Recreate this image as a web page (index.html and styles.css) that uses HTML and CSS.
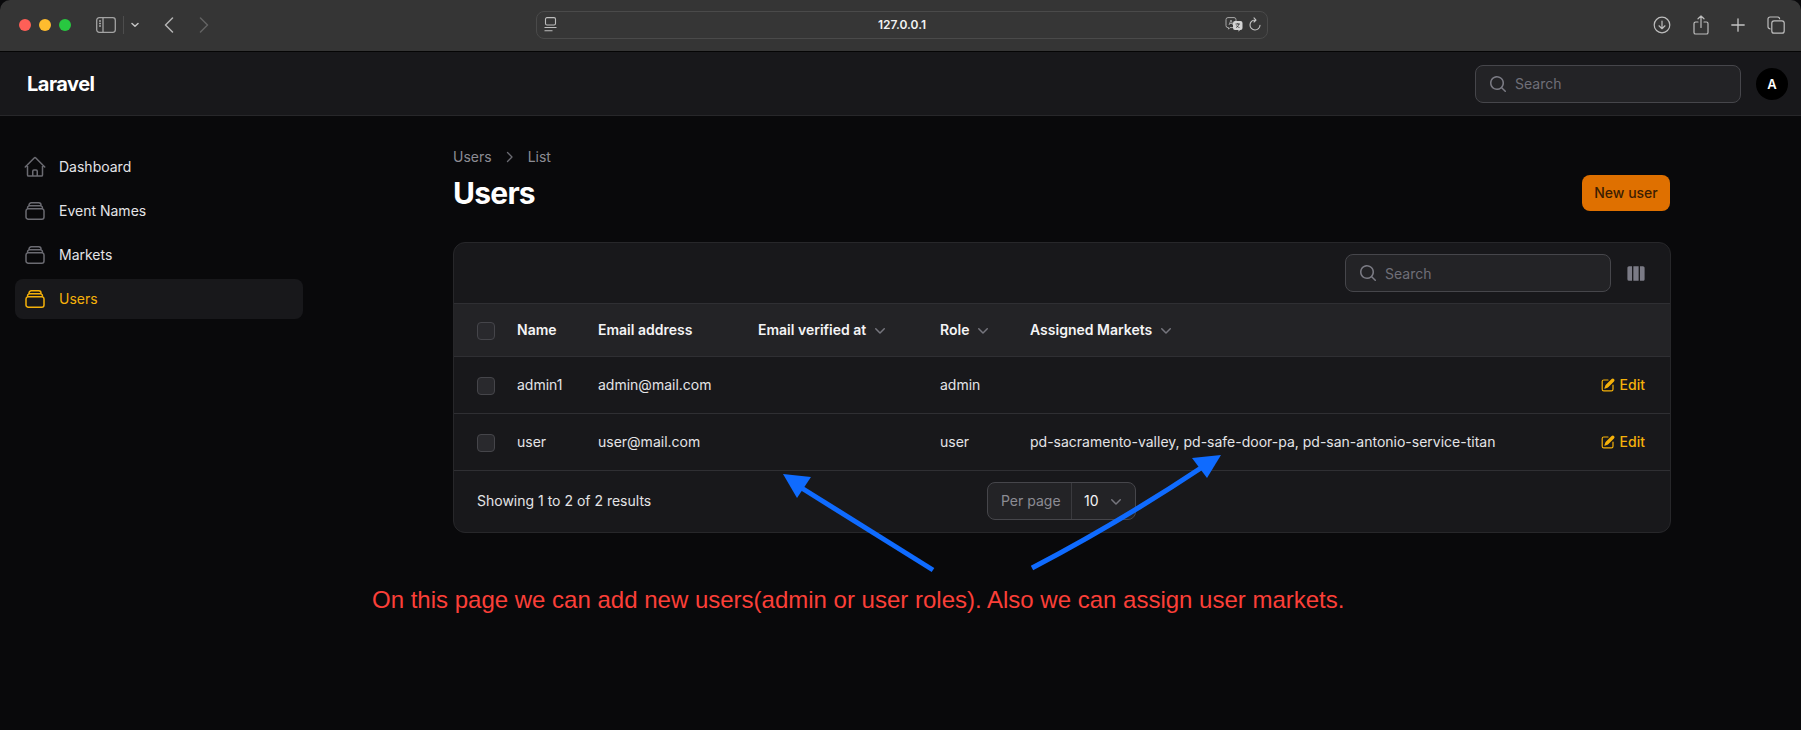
FILE: index.html
```html
<!DOCTYPE html>
<html lang="en">
<head>
  <meta charset="UTF-8" />
  <title>Users - Laravel</title>
  <link rel="stylesheet" href="styles.css">
</head>
<body>
  <svg class="icon-defs" aria-hidden="true">
    <symbol id="i-home" viewBox="0 0 24 24"><path d="m2.25 12 8.954-8.955c.44-.439 1.152-.439 1.591 0L21.75 12M4.5 9.75v10.125c0 .621.504 1.125 1.125 1.125H9.75v-4.875c0-.621.504-1.125 1.125-1.125h2.25c.621 0 1.125.504 1.125 1.125V21h4.125c.621 0 1.125-.504 1.125-1.125V9.75M8.25 21h8.25" fill="none" stroke="currentColor" stroke-width="1.5" stroke-linecap="round" stroke-linejoin="round"/></symbol>
    <symbol id="i-stack" viewBox="0 0 24 24"><path d="M6 6.878V6a2.25 2.25 0 0 1 2.25-2.25h7.5A2.25 2.25 0 0 1 18 6v.878m-12 0c.235-.083.487-.128.75-.128h10.5c.263 0 .515.045.75.128m-12 0A2.25 2.25 0 0 0 4.5 9v.878m13.5-3A2.25 2.25 0 0 1 19.5 9v.878m0 0a2.246 2.246 0 0 0-.75-.128H5.25c-.263 0-.515.045-.75.128m15 0A2.25 2.25 0 0 1 21 12v6a2.25 2.25 0 0 1-2.25 2.25H5.25A2.25 2.25 0 0 1 3 18v-6c0-.98.626-1.813 1.5-2.122" fill="none" stroke="currentColor" stroke-width="1.5" stroke-linecap="round" stroke-linejoin="round"/></symbol>
    <symbol id="i-search" viewBox="0 0 20 20"><path fill="currentColor" fill-rule="evenodd" clip-rule="evenodd" d="M9 3.5a5.5 5.5 0 1 0 0 11 5.5 5.5 0 0 0 0-11ZM2 9a7 7 0 1 1 12.452 4.391l3.328 3.329a.75.75 0 1 1-1.06 1.06l-3.329-3.328A7 7 0 0 1 2 9Z"/></symbol>
    <symbol id="i-chevron" viewBox="0 0 20 20"><path fill="currentColor" fill-rule="evenodd" clip-rule="evenodd" d="M5.22 8.22a.75.75 0 0 1 1.06 0L10 11.94l3.72-3.72a.75.75 0 1 1 1.06 1.06l-4.25 4.25a.75.75 0 0 1-1.06 0L5.22 9.28a.75.75 0 0 1 0-1.06Z"/></symbol>
    <symbol id="i-edit" viewBox="0 0 20 20"><path fill="currentColor" d="m5.433 13.917 1.262-3.155A4 4 0 0 1 7.58 9.42l6.92-6.918a2.121 2.121 0 0 1 3 3l-6.92 6.918c-.383.383-.84.685-1.343.886l-3.154 1.262a.5.5 0 0 1-.65-.65Z"/><path fill="currentColor" d="M3.5 5.75c0-.69.56-1.25 1.25-1.25H10A.75.75 0 0 0 10 3H4.75A2.75 2.75 0 0 0 2 5.75v9.5A2.75 2.75 0 0 0 4.75 18h9.5A2.75 2.75 0 0 0 17 15.25V10a.75.75 0 0 0-1.5 0v5.25c0 .69-.56 1.25-1.25 1.25h-9.5c-.69 0-1.25-.56-1.25-1.25v-9.5Z"/></symbol>
  </svg>

  <!-- browser toolbar -->
  <div class="chrome">
    <div class="chrome-left">
      <span class="light light-red"></span>
      <span class="light light-yellow"></span>
      <span class="light light-green"></span>
      <svg class="sidebar-toggle" width="20" height="16" viewBox="0 0 20 16" fill="none" stroke="#a3a3a3" stroke-width="1.3"><rect x="0.7" y="0.7" width="18.6" height="14.6" rx="2.5"/><path d="M7 1v14M3 4h2M3 6.5h2M3 9h2"/></svg>
      <span class="chrome-divider"></span>
      <svg class="chrome-caret" width="8" height="6" viewBox="0 0 8 6" fill="none" stroke="#c4c4c4" stroke-width="1.5" stroke-linecap="round" stroke-linejoin="round"><path d="M1 1.5 4 4.2 7 1.5"/></svg>
      <svg class="chrome-back" width="10" height="16" viewBox="0 0 10 16" fill="none" stroke="#b4b4b4" stroke-width="1.5" stroke-linecap="round" stroke-linejoin="round"><path d="M8.5 1 1.5 8l7 7"/></svg>
      <svg class="chrome-forward" width="10" height="16" viewBox="0 0 10 16" fill="none" stroke="#636363" stroke-width="1.5" stroke-linecap="round" stroke-linejoin="round"><path d="M1.5 1l7 7-7 7"/></svg>
    </div>
    <div class="urlbar">
      <svg class="url-page" width="13" height="15" viewBox="0 0 13 15" fill="none" stroke="#bdbdbd" stroke-width="1.1"><rect x="1.5" y="0.6" width="10" height="7.4" rx="1.5"/><path d="M0.5 10.5h12M0.5 13.8h8"/></svg>
      <span class="url-text">127.0.0.1</span>
      <svg class="url-translate" width="18" height="15" viewBox="0 0 18 15"><path d="M3 0.6h6a2 2 0 0 1 2 2v6a2 2 0 0 1-2 2H5l-1.500 1.600V10.600H3a2 2 0 0 1-2-2v-6a2 2 0 0 1 2-2Z" fill="none" stroke="#a8a8a8" stroke-width="1"/><path d="M4 8l2-5 2 5M4.800 6.500h2.400" fill="none" stroke="#a8a8a8" stroke-width="0.9"/><path d="M10 4h5.500a2 2 0 0 1 2 2v5a2 2 0 0 1-2 2H15l-1.500 1.800V13H10a2 2 0 0 1-2-2V6a2 2 0 0 1 2-2Z" fill="#d4d4d4"/><path d="M10.500 7h4.500M12.800 6v1M11 10.500c1.500-.5 2.500-1.800 2.800-3.500M11.500 8.500c.7 1 1.500 1.700 3 2" fill="none" stroke="#353535" stroke-width="0.8"/></svg>
      <svg class="url-reload" width="12" height="15" viewBox="0 0 12 15" fill="none" stroke="#c4c4c4" stroke-width="1.1" stroke-linecap="round" stroke-linejoin="round"><path d="M6 3a5 5 0 1 0 5 5.2M5 0.8 7 3 5 5"/></svg>
    </div>
    <div class="chrome-right">
      <svg width="18" height="18" viewBox="0 0 18 18" fill="none" stroke="#bdbdbd" stroke-width="1.2" stroke-linecap="round" stroke-linejoin="round"><circle cx="9" cy="9" r="7.8"/><path d="M9 5v7.5M6 9.8l3 2.9 3-2.9"/></svg>
      <svg width="16" height="20" viewBox="0 0 16 20" fill="none" stroke="#bdbdbd" stroke-width="1.2" stroke-linecap="round" stroke-linejoin="round"><path d="M5 7H2.6A1.6 1.6 0 0 0 1 8.6v8.8A1.6 1.6 0 0 0 2.6 19h10.8a1.6 1.6 0 0 0 1.6-1.6V8.6A1.6 1.6 0 0 0 13.400 7H11M8 12.500V1M5 3.800 8 1l3 2.800"/></svg>
      <svg width="14" height="14" viewBox="0 0 14 14" fill="none" stroke="#c4c4c4" stroke-width="1.3" stroke-linecap="round"><path d="M7 0.800v12.400M0.800 7h12.400"/></svg>
      <svg width="18" height="18" viewBox="0 0 18 18" fill="none" stroke="#bdbdbd" stroke-width="1.2"><path d="M3.500 12.800A2.200 2.200 0 0 1 1 10.600V3a2 2 0 0 1 2-2h7.500a2.200 2.200 0 0 1 2.200 2.200"/><rect x="4.800" y="4.800" width="12.400" height="12.400" rx="2.300"/></svg>
    </div>
  </div>

  <!-- app top bar -->
  <header class="topbar">
    <div class="brand">Laravel</div>
    <div class="topbar-right">
      <div class="search-box">
        <svg class="search-icon"><use href="#i-search"/></svg>
        <span>Search</span>
      </div>
      <div class="avatar">A</div>
    </div>
  </header>

  <div class="layout">
    <nav class="sidebar">
      <a class="nav-item"><svg class="nav-icon"><use href="#i-home"/></svg>Dashboard</a>
      <a class="nav-item"><svg class="nav-icon"><use href="#i-stack"/></svg>Event Names</a>
      <a class="nav-item"><svg class="nav-icon"><use href="#i-stack"/></svg>Markets</a>
      <a class="nav-item nav-active"><svg class="nav-icon"><use href="#i-stack"/></svg>Users</a>
    </nav>

    <main class="content">
      <div class="page-head">
        <div>
          <div class="breadcrumb">
            <span>Users</span>
            <svg class="crumb-sep" width="8" height="12" viewBox="0 0 8 12" fill="none" stroke="#6b6b72" stroke-width="1.3" stroke-linecap="round" stroke-linejoin="round"><path d="M1.500 1.500 6 6l-4.500 4.500"/></svg>
            <span>List</span>
          </div>
          <h1>Users</h1>
        </div>
        <button class="btn-new">New user</button>
      </div>

      <section class="card">
        <div class="toolbar">
          <div class="search-box">
            <svg class="search-icon"><use href="#i-search"/></svg>
            <span>Search</span>
          </div>
          <svg class="columns-icon" viewBox="2 3.500 20 17"><path fill="currentColor" d="M15 3.750H9v16.500h6V3.750ZM16.500 20.250h3.375c1.035 0 1.875-.84 1.875-1.875V5.625c0-1.036-.84-1.875-1.875-1.875H16.500v16.500ZM4.125 3.750H7.500v16.500H4.125a1.875 1.875 0 0 1-1.875-1.875V5.625c0-1.036.84-1.875 1.875-1.875Z"/></svg>
        </div>

        <table class="users">
          <colgroup>
            <col class="col-check"><col class="col-name"><col class="col-email"><col class="col-verified"><col class="col-role"><col>
            <col class="col-action">
          </colgroup>
          <thead>
            <tr>
              <th class="cell-check"><span class="checkbox"></span></th>
              <th>Name</th>
              <th>Email address</th>
              <th>Email verified at<svg class="sort"><use href="#i-chevron"/></svg></th>
              <th>Role<svg class="sort"><use href="#i-chevron"/></svg></th>
              <th>Assigned Markets<svg class="sort"><use href="#i-chevron"/></svg></th>
              <th></th>
            </tr>
          </thead>
          <tbody>
            <tr>
              <td class="cell-check"><span class="checkbox"></span></td>
              <td>admin1</td>
              <td>admin@mail.com</td>
              <td></td>
              <td>admin</td>
              <td></td>
              <td class="cell-action"><a class="edit"><svg class="edit-icon"><use href="#i-edit"/></svg>Edit</a></td>
            </tr>
            <tr>
              <td class="cell-check"><span class="checkbox"></span></td>
              <td>user</td>
              <td>user@mail.com</td>
              <td></td>
              <td>user</td>
              <td>pd-sacramento-valley, pd-safe-door-pa, pd-san-antonio-service-titan</td>
              <td class="cell-action"><a class="edit"><svg class="edit-icon"><use href="#i-edit"/></svg>Edit</a></td>
            </tr>
          </tbody>
        </table>

        <div class="card-foot">
          <span class="results">Showing 1 to 2 of 2 results</span>
          <div class="per-page">
            <span class="per-label">Per page</span>
            <span class="per-value">10<svg class="per-caret"><use href="#i-chevron"/></svg></span>
          </div>
        </div>
      </section>
    </main>
  </div>

  <!-- annotation drawn on top of the screenshot -->
  <svg class="arrows" width="1801" height="730" viewBox="0 0 1801 730">
    <path d="M933 570 800 487" fill="none" stroke="#0f6bff" stroke-width="5"/>
    <polygon points="783,474 811,477 797,498" fill="#0f6bff"/>
    <path d="M1032 568Q1120 522 1204 466" fill="none" stroke="#0f6bff" stroke-width="5"/>
    <polygon points="1221,455 1192,458 1207,478" fill="#0f6bff"/>
  </svg>
  <p class="note">On this page we can add new users(admin or user roles). Also we can assign user markets.</p>
</body>
</html>
```

FILE: styles.css
```css
* {
  box-sizing: border-box;
}
html,
body {
  height: 100%;
}
body {
  margin: 0;
  height: 730px;
  overflow: hidden;
  position: relative;
  background: #09090b;
  color: #e4e4e7;
  font-family: Inter, "Noto Sans", sans-serif;
  font-size: 14px;
  line-height: 20px;
}
.icon-defs {
  display: none;
}

/* browser toolbar */
.chrome {
  height: 52px;
  display: flex;
  align-items: center;
  background: #353535;
  border-bottom: 1px solid #050505;
  border-radius: 10px 10px 0 0;
  padding-bottom: 2px;
}
.chrome-left {
  width: 536px;
  display: flex;
  align-items: center;
  padding-left: 19px;
}
.light {
  width: 12px;
  height: 12px;
  border-radius: 50%;
  margin-right: 8px;
}
.light-red {
  background: #ff5f57;
}
.light-yellow {
  background: #febc2e;
}
.light-green {
  background: #28c840;
}
.sidebar-toggle {
  margin-left: 17px;
}
.chrome-divider {
  width: 1px;
  height: 18px;
  background: #4d4d4d;
  margin-left: 7px;
}
.chrome-caret {
  margin-left: 7px;
}
.chrome-back {
  margin-left: 25px;
}
.chrome-forward {
  margin-left: 25px;
}
.urlbar {
  width: 732px;
  height: 28px;
  display: flex;
  align-items: center;
  position: relative;
  background: #363636;
  border: 1px solid #4a4a4a;
  border-radius: 8px;
  padding: 0 6px 0 7px;
  color: #f2f2f2;
  font-size: 12px;
  font-weight: 600;
}
.url-text {
  flex: 1;
  text-align: center;
  margin-left: 22px;
}
.url-translate {
  margin-right: 6px;
}
.chrome-right {
  flex: 1;
  display: flex;
  align-items: center;
  justify-content: flex-end;
  gap: 22px;
  padding-right: 16px;
}

/* top bar */
.topbar {
  height: 64px;
  display: flex;
  align-items: center;
  justify-content: space-between;
  background: #18181b;
  border-bottom: 1px solid #27272a;
  padding: 0 13px 0 27px;
}
.brand {
  color: #fff;
  font-size: 20px;
  font-weight: 700;
  letter-spacing: -0.5px;
}
.topbar-right {
  display: flex;
  align-items: center;
  gap: 15px;
}
.search-box {
  width: 266px;
  height: 38px;
  display: flex;
  align-items: center;
  gap: 7px;
  background: #232326;
  border: 1px solid #46464b;
  border-radius: 8px;
  padding-left: 12px;
  color: #6f6f78;
}
.search-icon {
  width: 20px;
  height: 20px;
  color: #7b7b84;
}
.avatar {
  width: 32px;
  height: 32px;
  border-radius: 50%;
  display: flex;
  align-items: center;
  justify-content: center;
  background: #000;
  color: #fff;
  font-size: 13px;
  font-weight: 600;
}

/* page */
.layout {
  display: flex;
}
.sidebar {
  width: 320px;
  display: flex;
  flex-direction: column;
  gap: 4px;
  padding: 31px 17px 0 15px;
}
.nav-item {
  height: 40px;
  display: flex;
  align-items: center;
  gap: 12px;
  padding-left: 8px;
  border-radius: 8px;
  color: #e4e4e7;
}
.nav-icon {
  width: 24px;
  height: 24px;
  color: #6b6b72;
}
.nav-active {
  background: #18181b;
  color: #f5b10a;
}
.nav-active .nav-icon {
  color: #f5b10a;
}
.content {
  flex: 1;
  padding: 31px 130px 0 133px;
}
.page-head {
  display: flex;
  align-items: flex-end;
  justify-content: space-between;
}
.breadcrumb {
  display: flex;
  align-items: center;
  gap: 14px;
  color: #8c8c94;
}
h1 {
  margin: 8px 0 0;
  color: #fff;
  font-size: 30px;
  line-height: 36px;
  font-weight: 700;
  letter-spacing: -0.75px;
}
.btn-new {
  width: 88px;
  height: 36px;
  margin-right: 1px;
  border: 0;
  border-radius: 8px;
  background: #df7000;
  color: #3c1d02;
  font: 500 14px/20px Inter, sans-serif;
}

/* table card */
.card {
  margin-top: 31px;
  height: 291px;
  background: #18181b;
  border: 1px solid #27272a;
  border-radius: 12px;
  overflow: hidden;
}
.toolbar {
  height: 61px;
  display: flex;
  align-items: center;
  justify-content: flex-end;
  gap: 16px;
  padding-right: 25px;
  border-bottom: 1px solid #2f2f33;
}
.toolbar .search-box span {
  padding-top: 2px;
}
.columns-icon {
  width: 18px;
  height: 15px;
  color: #7b7b86;
}
.users {
  width: 100%;
  table-layout: fixed;
  border-collapse: collapse;
}
.col-check {
  width: 63px;
}
.col-name {
  width: 81px;
}
.col-email {
  width: 160px;
}
.col-verified {
  width: 182px;
}
.col-role {
  width: 90px;
}
.col-action {
  width: 110px;
}
th {
  height: 52px;
  padding: 0;
  text-align: left;
  background: #232326;
  color: #f4f4f5;
  font-weight: 600;
}
td {
  height: 57px;
  padding: 0;
  border-top: 1px solid #2f2f33;
  white-space: nowrap;
}
.users tbody tr:last-child td {
  border-bottom: 1px solid #2f2f33;
}
.cell-check {
  padding-left: 23px;
}
.checkbox {
  display: block;
  width: 18px;
  height: 18px;
  margin-top: 2px;
  background: #29292d;
  border: 1px solid #45454a;
  border-radius: 4px;
}
.sort {
  width: 20px;
  height: 20px;
  margin-left: 4px;
  vertical-align: -5px;
  color: #76767e;
}
.cell-action {
  padding-right: 25px;
}
.edit {
  display: flex;
  align-items: center;
  justify-content: flex-end;
  gap: 4px;
  color: #f5b10a;
  font-weight: 500;
}
.edit-icon {
  width: 16px;
  height: 16px;
}
.card-foot {
  height: 62px;
  display: flex;
  align-items: center;
  padding: 0 0 2px 23px;
}
.results {
  width: 510px;
}
.per-page {
  width: 149px;
  height: 38px;
  display: flex;
  align-items: center;
  background: #232326;
  border: 1px solid #46464b;
  border-radius: 8px;
}
.per-label {
  width: 84px;
  height: 100%;
  display: flex;
  align-items: center;
  padding-left: 13px;
  border-right: 1px solid #3a3a3e;
  color: #8c8c94;
}
.per-value {
  display: flex;
  align-items: center;
  padding-left: 12px;
  color: #f4f4f5;
}
.per-caret {
  width: 20px;
  height: 20px;
  margin-left: 7px;
  color: #76767e;
}

/* annotation */
.arrows {
  position: absolute;
  left: 0;
  top: 0;
  pointer-events: none;
}
.note {
  position: absolute;
  left: 372px;
  top: 586px;
  margin: 0;
  color: #fb3f38;
  font-family: "Liberation Sans", Arial, sans-serif;
  font-size: 24px;
  line-height: 28px;
  white-space: nowrap;
}
```
